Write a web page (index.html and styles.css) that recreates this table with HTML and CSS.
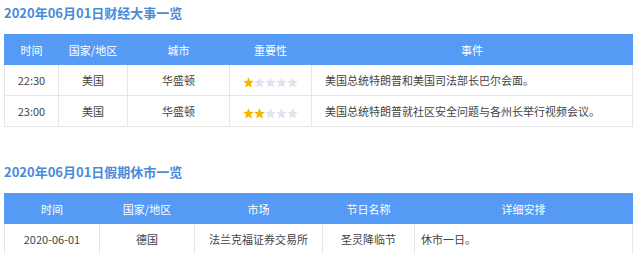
FILE: index.html
```html
<!DOCTYPE html>
<html lang="zh">
<head>
<meta charset="utf-8">
<link rel="stylesheet" href="styles.css">
</head>
<body>
<div class="page">
  <section class="block">
    <h2 class="title">2020年06月01日财经大事一览</h2>
    <table class="grid">
      <colgroup>
        <col style="width:54px"><col style="width:69px"><col style="width:102px"><col style="width:82px"><col>
      </colgroup>
      <thead>
        <tr><th>时间</th><th>国家/地区</th><th>城市</th><th>重要性</th><th>事件</th></tr>
      </thead>
      <tbody>
        <tr>
          <td>22:30</td><td>美国</td><td>华盛顿</td>
          <td><span class="stars">
            <svg class="star on" viewBox="0 0 11 11"><polygon points="5.5,0.2 7,3.8 10.8,4 7.9,6.5 8.9,10.6 5.5,8.4 2.1,10.6 3.1,6.5 0.2,4 4,3.8"/></svg>
            <svg class="star" viewBox="0 0 11 11"><polygon points="5.5,0.2 7,3.8 10.8,4 7.9,6.5 8.9,10.6 5.5,8.4 2.1,10.6 3.1,6.5 0.2,4 4,3.8"/></svg>
            <svg class="star" viewBox="0 0 11 11"><polygon points="5.5,0.2 7,3.8 10.8,4 7.9,6.5 8.9,10.6 5.5,8.4 2.1,10.6 3.1,6.5 0.2,4 4,3.8"/></svg>
            <svg class="star" viewBox="0 0 11 11"><polygon points="5.5,0.2 7,3.8 10.8,4 7.9,6.5 8.9,10.6 5.5,8.4 2.1,10.6 3.1,6.5 0.2,4 4,3.8"/></svg>
            <svg class="star" viewBox="0 0 11 11"><polygon points="5.5,0.2 7,3.8 10.8,4 7.9,6.5 8.9,10.6 5.5,8.4 2.1,10.6 3.1,6.5 0.2,4 4,3.8"/></svg>
          </span></td>
          <td class="left ev">美国总统特朗普和美国司法部长巴尔会面。</td>
        </tr>
        <tr>
          <td>23:00</td><td>美国</td><td>华盛顿</td>
          <td><span class="stars">
            <svg class="star on" viewBox="0 0 11 11"><polygon points="5.5,0.2 7,3.8 10.8,4 7.9,6.5 8.9,10.6 5.5,8.4 2.1,10.6 3.1,6.5 0.2,4 4,3.8"/></svg>
            <svg class="star on" viewBox="0 0 11 11"><polygon points="5.5,0.2 7,3.8 10.8,4 7.9,6.5 8.9,10.6 5.5,8.4 2.1,10.6 3.1,6.5 0.2,4 4,3.8"/></svg>
            <svg class="star" viewBox="0 0 11 11"><polygon points="5.5,0.2 7,3.8 10.8,4 7.9,6.5 8.9,10.6 5.5,8.4 2.1,10.6 3.1,6.5 0.2,4 4,3.8"/></svg>
            <svg class="star" viewBox="0 0 11 11"><polygon points="5.5,0.2 7,3.8 10.8,4 7.9,6.5 8.9,10.6 5.5,8.4 2.1,10.6 3.1,6.5 0.2,4 4,3.8"/></svg>
            <svg class="star" viewBox="0 0 11 11"><polygon points="5.5,0.2 7,3.8 10.8,4 7.9,6.5 8.9,10.6 5.5,8.4 2.1,10.6 3.1,6.5 0.2,4 4,3.8"/></svg>
          </span></td>
          <td class="left ev">美国总统特朗普就社区安全问题与各州长举行视频会议。</td>
        </tr>
      </tbody>
    </table>
  </section>
  <section class="block second">
    <h2 class="title">2020年06月01日假期休市一览</h2>
    <table class="grid">
      <colgroup>
        <col style="width:95px"><col style="width:95px"><col style="width:128px"><col style="width:92px"><col>
      </colgroup>
      <thead>
        <tr><th>时间</th><th>国家/地区</th><th>市场</th><th>节日名称</th><th>详细安排</th></tr>
      </thead>
      <tbody>
        <tr>
          <td>2020-06-01</td><td>德国</td><td>法兰克福证券交易所</td><td>圣灵降临节</td>
          <td class="left det">休市一日。</td>
        </tr>
      </tbody>
    </table>
  </section>
</div>
</body>
</html>
```

FILE: styles.css
```css
html, body {
  margin: 0;
  padding: 0;
  background: #ffffff;
}
body {
  font-family: "Microsoft YaHei", "Noto Sans CJK SC", sans-serif;
  color: #444444;
}
.page {
  width: 629px;
  margin-left: 4px;
}
.block.second {
  margin-top: 32px;
}
.title {
  margin: 0 0 8px 0;
  font-size: 13px;
  line-height: 26px;
  font-weight: bold;
  color: #4a8ad8;
}
.grid {
  width: 100%;
  border-collapse: collapse;
  table-layout: fixed;
  font-size: 11px;
}
.grid th {
  height: 29px;
  padding: 0;
  background: #559bf5;
  color: #ffffff;
  font-weight: normal;
  font-size: 11px;
  text-align: center;
  border: 1px solid #559bf5;
}
.grid td {
  height: 30px;
  padding: 0;
  text-align: center;
  border: 1px solid #e6e6e6;
  color: #444444;
}
.grid td.left {
  text-align: left;
}
.grid td.ev {
  padding-left: 13px;
}
.grid td.det {
  padding-left: 6px;
}
.stars {
  display: inline-flex;
  gap: 0;
  vertical-align: middle;
}
.star {
  width: 11px;
  height: 11px;
  display: block;
  fill: #dfe4ee;
}
.star.on {
  fill: #f6b600;
}
```
